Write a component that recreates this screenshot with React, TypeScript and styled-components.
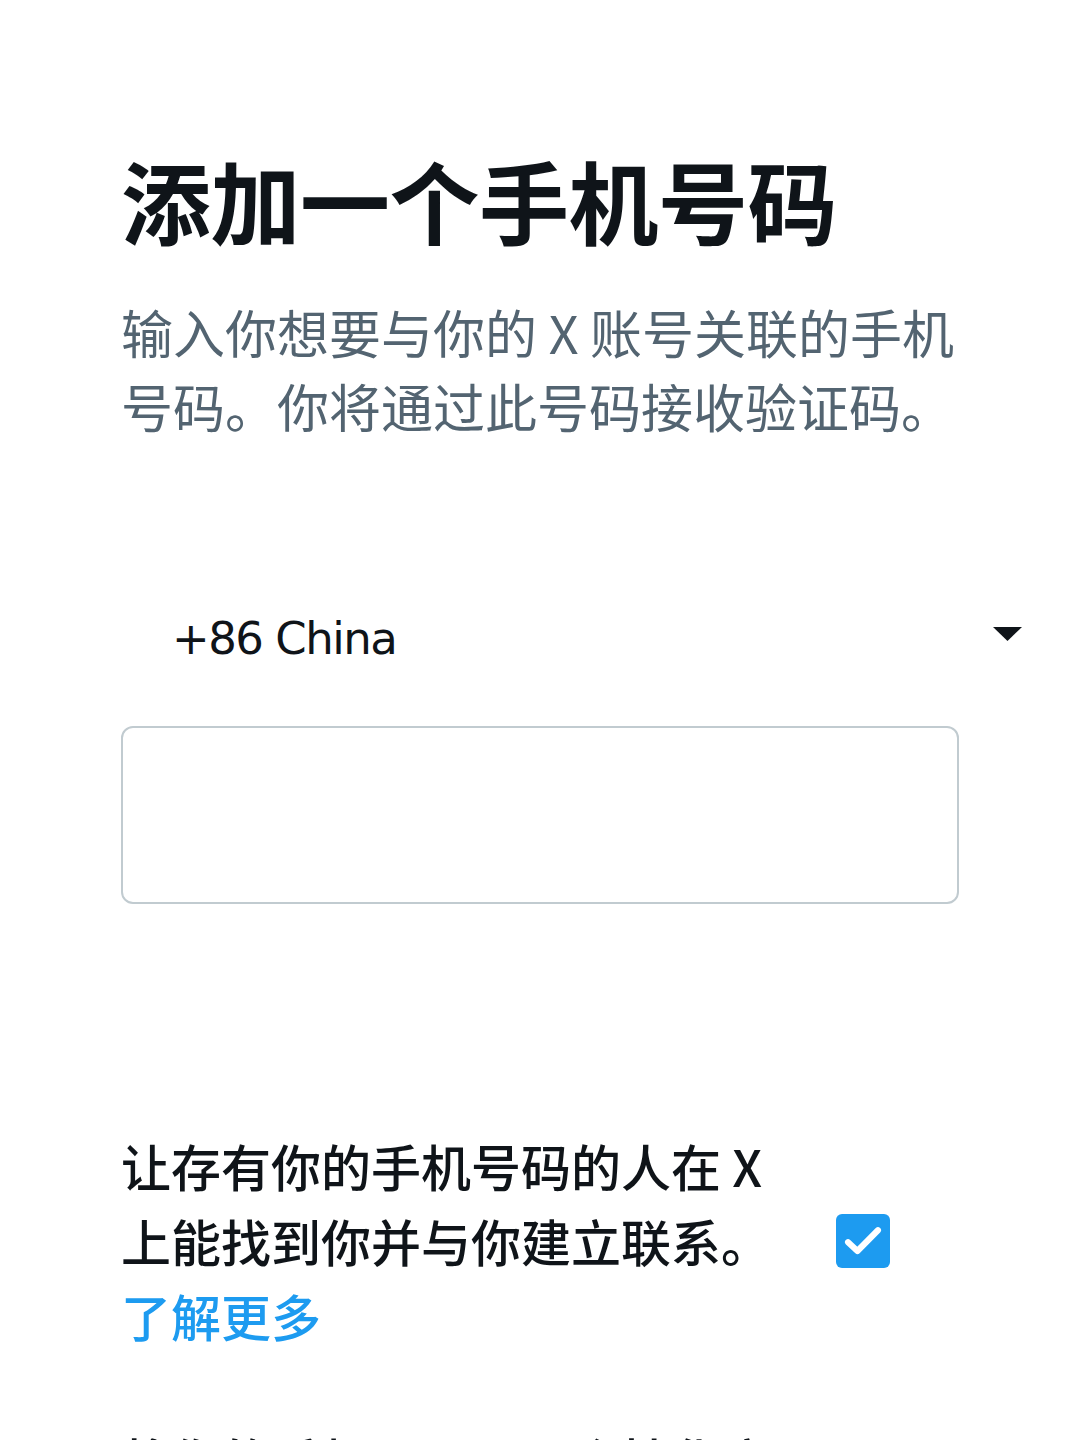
import styled, { createGlobalStyle } from 'styled-components';

const GlobalStyle = createGlobalStyle`
  html, body {
    margin: 0;
    padding: 0;
    background: #ffffff;
  }
  body {
    font-family: 'Noto Sans CJK SC', 'Noto Sans', sans-serif;
    -webkit-font-smoothing: antialiased;
  }
`;

const Page = styled.main`
  width: 1080px;
  height: 1440px;
  overflow: hidden;
  box-sizing: border-box;
  padding: 145px 58px 0 121px;
`;

const Title = styled.h1`
  margin: 0;
  font-size: 90px;
  line-height: 108px;
  font-weight: 700;
  color: #0f1419;
  letter-spacing: -0.5px;
`;

const Subtitle = styled.p`
  margin: 42px 0 0;
  width: 850px;
  font-size: 52px;
  line-height: 74px;
  font-weight: 400;
  color: #536471;
`;

const CountrySelect = styled.div`
  margin-top: 145px;
  height: 100px;
  display: flex;
  align-items: center;
  justify-content: space-between;
  padding-left: 51px;
`;

const CountryLabel = styled.span`
  font-family: 'DejaVu Sans', 'Noto Sans', sans-serif;
  font-size: 45px;
  color: #0f1419;
  letter-spacing: -1.5px;
`;

const Caret = styled.svg`
  width: 29px;
  height: 14px;
  margin-top: -8px;
`;

const PhoneInput = styled.input`
  display: block;
  margin: 38px 0 0;
  width: 838px;
  height: 178px;
  box-sizing: border-box;
  border: 2px solid #c1cbd0;
  border-radius: 12px;
  background: #ffffff;
  outline: none;
  padding: 0 24px;
  font-size: 46px;
  font-family: 'Noto Sans', sans-serif;
`;

const ContactRow = styled.div`
  margin-top: 224px;
  display: flex;
  align-items: center;
  gap: 35px;
`;

const ContactText = styled.p`
  margin: 0;
  width: 680px;
  font-size: 50px;
  line-height: 75px;
  font-weight: 500;
  color: #0f1419;
`;

const LearnMore = styled.a`
  color: #1d9bf0;
  text-decoration: none;
`;

const CheckBox = styled.span`
  width: 54px;
  height: 54px;
  flex: none;
  border-radius: 6px;
  background: #1d9bf0;
  display: flex;
  align-items: center;
  justify-content: center;
`;

const NextText = styled.p`
  margin: 69px 0 0;
  width: 680px;
  font-size: 50px;
  line-height: 75px;
  font-weight: 500;
  color: #0f1419;
`;

export default function App() {
  return (
    <>
      <GlobalStyle />
      <Page>
        <Title>添加一个手机号码</Title>
        <Subtitle>输入你想要与你的 X 账号关联的手机号码。你将通过此号码接收验证码。</Subtitle>

        <CountrySelect>
          <CountryLabel>+86 China</CountryLabel>
          <Caret viewBox="0 0 29 14">
            <polygon points="0,0 29,0 14.5,14" fill="#0f1419" />
          </Caret>
        </CountrySelect>

        <PhoneInput type="tel" aria-label="手机号码" />

        <ContactRow>
          <ContactText>
            让存有你的手机号码的人在 X 上能找到你并与你建立联系。
            <LearnMore href="#">了解更多</LearnMore>
          </ContactText>
          <CheckBox>
            <svg width="46" height="46" viewBox="0 0 24 24">
              <path d="M4.2 12.6l4.9 4.6L19.8 6.4" fill="none" stroke="#ffffff" strokeWidth="3.2" strokeLinecap="round" strokeLinejoin="round" />
            </svg>
          </CheckBox>
        </ContactRow>

        <NextText>将你的手机号码用于个性化广告。</NextText>
      </Page>
    </>
  );
}
